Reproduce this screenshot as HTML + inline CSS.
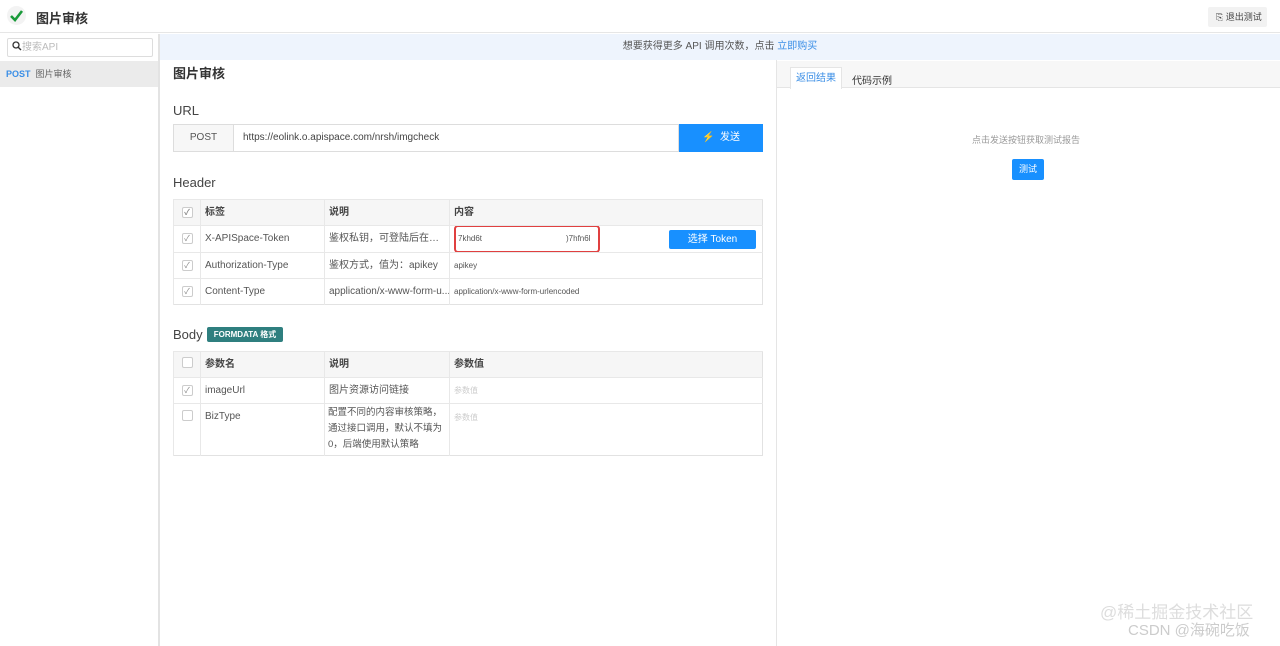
<!DOCTYPE html>
<html><head><meta charset="utf-8"><style>
*{margin:0;padding:0;box-sizing:border-box}
body{width:1280px;height:646px;overflow:hidden;background:#fff;font-family:"Liberation Sans","Noto Sans CJK SC",sans-serif;font-size:12px;color:#333;position:relative}
.abs{position:absolute}
table{border-collapse:collapse;position:absolute;left:173px;width:590px;border:1px solid #e2e2e2;font-size:10px;table-layout:fixed}
td{border-top:1px solid #e8e8e8;border-left:1px solid #e8e8e8;padding:0 4px;vertical-align:middle;color:#555;white-space:nowrap;overflow:hidden;line-height:14px}
tr.h td{background:#f6f6f6;font-weight:bold;color:#444}
.cb{display:inline-block;width:11px;height:11px;border:1px solid #ccc;border-radius:2px;background:#fff;font-size:8px;line-height:9px;text-align:center;color:#888}
</style></head><body>
<div class="abs" style="left:0;top:0;width:1280px;height:33px;border-bottom:1px solid #e6e6e6;background:#fff"></div>
<div class="abs" style="left:7px;top:6px;width:19px;height:19px;border-radius:50%;background:#f3f3f3"></div>
<svg class="abs" style="left:9px;top:8px" width="15" height="15" viewBox="0 0 15 15"><path d="M2 8 L6 12 L13 3" fill="none" stroke="#1a9a3a" stroke-width="2.6"/></svg>
<div class="abs" style="left:36px;top:8px;font-size:13px;font-weight:bold;color:#333">图片审核</div>
<div class="abs" style="left:1208px;top:7px;width:59px;height:20px;background:#f2f2f2;border-radius:2px;font-size:9px;line-height:20px;padding-left:8px;color:#444">⎘ 退出测试</div>
<div class="abs" style="left:160px;top:34px;width:1120px;height:26px;background:#eef4fd;font-size:10px;color:#555;text-align:center;line-height:26px">想要获得更多 API 调用次数，点击 <span style="color:#3a8ee6">立即购买</span></div>
<div class="abs" style="left:0;top:34px;width:160px;height:612px;background:#fff;border-right:2px solid #e3e3e3"></div>
<div class="abs" style="left:7px;top:38px;width:146px;height:19px;border:1px solid #ddd;border-radius:2px;font-size:10px;color:#bbb;line-height:17px;padding-left:4px"><svg width="10" height="10" viewBox="0 0 10 10" style="vertical-align:-1px"><circle cx="4" cy="4" r="3" fill="none" stroke="#333" stroke-width="1.3"/><path d="M6.2 6.2 L9 9" stroke="#333" stroke-width="1.4"/></svg>搜索API</div>
<div class="abs" style="left:0;top:61px;width:158px;height:26px;background:#ebebeb;font-size:9px;line-height:26px;padding-left:6px"><b style="color:#3a8ee6">POST</b> <span style="color:#666">&nbsp;图片审核</span></div>
<div class="abs" style="left:173px;top:63px;font-size:13px;font-weight:bold">图片审核</div>
<div class="abs" style="left:173px;top:103px;font-size:13px;color:#444">URL</div>
<div class="abs" style="left:173px;top:124px;width:506px;height:28px;border:1px solid #ddd;font-size:10px;line-height:26px">
<span style="display:inline-block;width:60px;background:#f7f7f7;border-right:1px solid #ddd;text-align:center;color:#555">POST</span><span style="padding-left:9px;color:#444">https://eolink.o.apispace.com/nrsh/imgcheck</span></div>
<div class="abs" style="left:679px;top:124px;width:84px;height:28px;background:#1890ff;color:#fff;font-size:10px;line-height:28px;text-align:center">⚡&nbsp; 发送</div>
<div class="abs" style="left:173px;top:175px;font-size:13px;color:#444">Header</div>
<table style="top:199px">
<colgroup><col style="width:27px"><col style="width:124px"><col style="width:125px"><col></colgroup>
<tr class="h" style="height:26px"><td style="text-align:center"><span class="cb">✓</span></td><td>标签</td><td>说明</td><td>内容</td></tr>
<tr style="height:26px"><td style="text-align:center"><span class="cb">✓</span></td><td>X-APISpace-Token</td><td style="text-overflow:ellipsis">鉴权私钥，可登陆后在管...</td><td><div style="position:relative;height:26px"><span class="abs" style="left:4px;top:6px;font-size:8px">7khd6t</span><span class="abs" style="left:112px;top:6px;font-size:8px">)7hfn6l</span><div class="abs" style="left:0;top:-1px;width:146px;height:28px;border:2px solid #e04040;border-radius:4px"></div><div class="abs" style="left:215px;top:4px;width:87px;height:19px;background:#1890ff;color:#fff;text-align:center;line-height:19px;border-radius:2px">选择 Token</div></div></td></tr>
<tr style="height:26px"><td style="text-align:center"><span class="cb">✓</span></td><td>Authorization-Type</td><td>鉴权方式，值为：apikey</td><td style="font-size:8px">apikey</td></tr>
<tr style="height:26px"><td style="text-align:center"><span class="cb">✓</span></td><td>Content-Type</td><td>application/x-www-form-u...</td><td style="font-size:8px">application/x-www-form-urlencoded</td></tr>
</table>
<div class="abs" style="left:173px;top:327px;font-size:13px;color:#444">Body</div>
<div class="abs" style="left:207px;top:327px;width:76px;height:15px;background:#2f7f7f;color:#fff;font-size:8px;line-height:15px;text-align:center;font-weight:bold;border-radius:2px">FORMDATA 格式</div>
<table style="top:351px">
<colgroup><col style="width:27px"><col style="width:124px"><col style="width:125px"><col></colgroup>
<tr class="h" style="height:26px"><td style="text-align:center"><span class="cb"></span></td><td>参数名</td><td>说明</td><td>参数值</td></tr>
<tr style="height:26px"><td style="text-align:center"><span class="cb">✓</span></td><td>imageUrl</td><td>图片资源访问链接</td><td style="font-size:8px;color:#ccc">参数值</td></tr>
<tr style="height:50px"><td style="text-align:center;vertical-align:top;padding-top:6px"><span class="cb"></span></td><td style="vertical-align:top;padding-top:6px">BizType</td><td style="line-height:16px;font-size:9.5px;padding:1px 3px 2px">配置不同的内容审核策略，<br>通过接口调用，默认不填为<br>0，后端使用默认策略</td><td style="font-size:8px;color:#ccc;vertical-align:top;padding-top:7px">参数值</td></tr>
</table>
<div class="abs" style="left:776px;top:60px;width:1px;height:586px;background:#e5e5e5"></div>
<div class="abs" style="left:777px;top:61px;width:503px;height:27px;background:#f7f7f7;border-bottom:1px solid #e5e5e5"></div>
<div class="abs" style="left:790px;top:67px;width:52px;height:22px;background:#fff;border:1px solid #e5e5e5;border-bottom:none;color:#3a8ee6;font-size:10px;text-align:center;line-height:21px">返回结果</div>
<div class="abs" style="left:852px;top:72px;font-size:10px;color:#333">代码示例</div>
<div class="abs" style="left:972px;top:133px;font-size:9px;color:#999">点击发送按钮获取测试报告</div>
<div class="abs" style="left:1012px;top:159px;width:32px;height:21px;background:#1890ff;color:#fff;font-size:9px;text-align:center;line-height:21px;border-radius:2px">测试</div>
<div class="abs" style="left:1100px;top:604px;font-size:17px;color:#ddd;line-height:18px">@稀土掘金技术社区</div>
<div class="abs" style="left:1128px;top:619px;font-size:15px;color:#ccc">CSDN @海碗吃饭</div>
</body></html>
